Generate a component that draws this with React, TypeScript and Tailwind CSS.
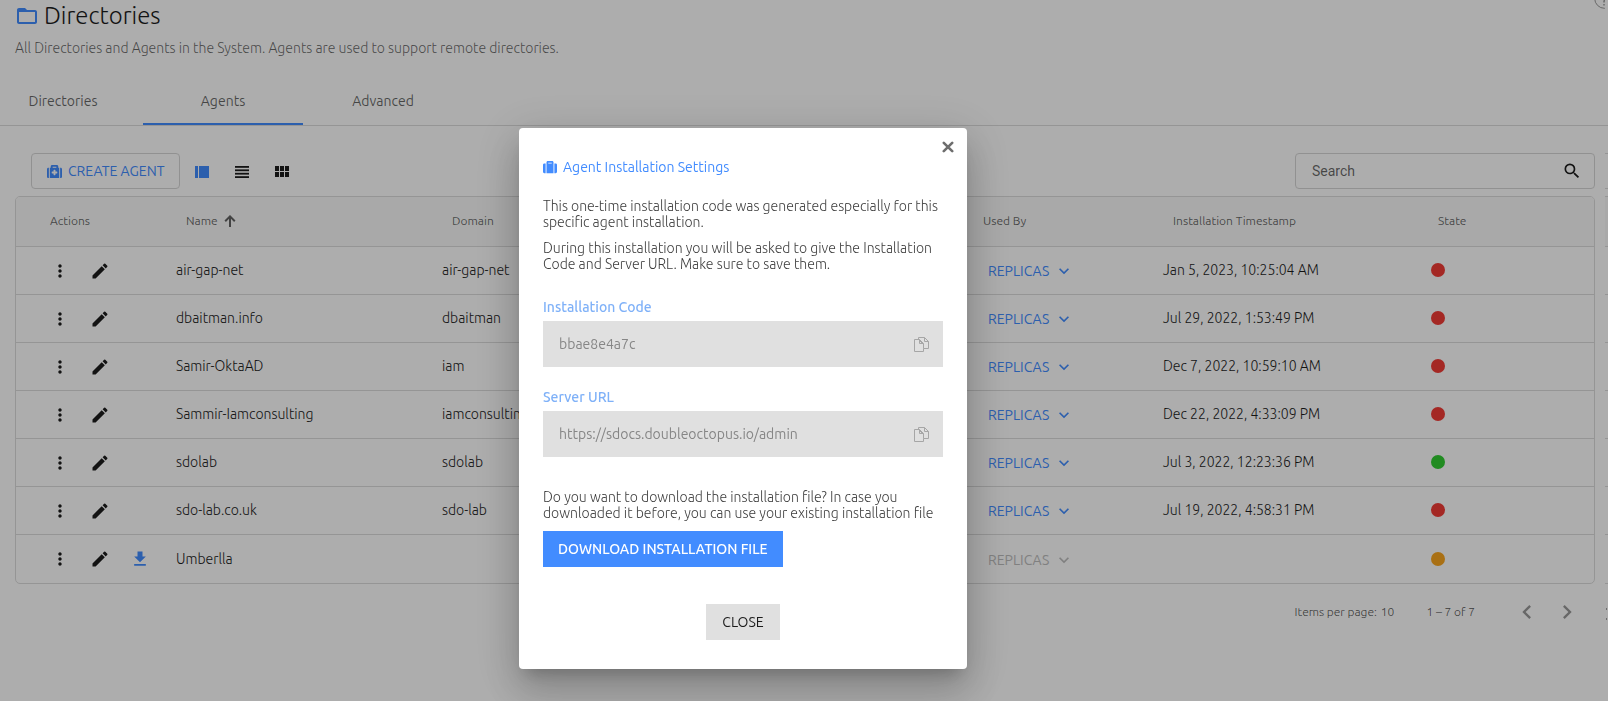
import { FaMedkit, FaSuitcase } from 'react-icons/fa';
import {
  MdChevronLeft,
  MdChevronRight,
  MdEdit,
  MdFileDownload,
  MdFolderOpen,
  MdKeyboardArrowDown,
  MdMoreVert,
  MdSearch,
} from 'react-icons/md';

type State = 'offline' | 'online' | 'pending';

interface Agent {
  name: string;
  domain: string;
  installed: string;
  state: State;
}

const AGENTS: Agent[] = [
  { name: 'air-gap-net', domain: 'air-gap-net', installed: 'Jan 5, 2023, 10:25:04 AM', state: 'offline' },
  { name: 'dbaitman.info', domain: 'dbaitman', installed: 'Jul 29, 2022, 1:53:49 PM', state: 'offline' },
  { name: 'Samir-OktaAD', domain: 'iam', installed: 'Dec 7, 2022, 10:59:10 AM', state: 'offline' },
  { name: 'Sammir-Iamconsulting', domain: 'iamconsulting', installed: 'Dec 22, 2022, 4:33:09 PM', state: 'offline' },
  { name: 'sdolab', domain: 'sdolab', installed: 'Jul 3, 2022, 12:23:36 PM', state: 'online' },
  { name: 'sdo-lab.co.uk', domain: 'sdo-lab', installed: 'Jul 19, 2022, 4:58:31 PM', state: 'offline' },
  { name: 'Umberlla', domain: '', installed: '', state: 'pending' },
];

const STATE_COLOR: Record<State, string> = {
  offline: 'bg-[#f23c36]',
  online: 'bg-[#32cd32]',
  pending: 'bg-[#faa61e]',
};

function SplitIcon() {
  return (
    <svg width="14" height="12" viewBox="0 0 14 12" fill="currentColor" aria-hidden="true">
      <rect width="3" height="12" />
      <rect x="4" width="10" height="12" />
    </svg>
  );
}

function LinesIcon() {
  return (
    <svg width="14" height="12" viewBox="0 0 14 12" fill="currentColor" aria-hidden="true">
      <rect width="14" height="1.8" />
      <rect y="3.4" width="14" height="1.8" />
      <rect y="6.8" width="14" height="1.8" />
      <rect y="10.2" width="14" height="1.8" />
    </svg>
  );
}

function GridIcon() {
  return (
    <svg width="14" height="11" viewBox="0 0 14 11" fill="currentColor" aria-hidden="true">
      {[0, 5, 10].map((x) =>
        [0, 6].map((y) => <rect key={`${x}-${y}`} x={x} y={y} width="4" height="5" />),
      )}
    </svg>
  );
}

function SortArrow() {
  return (
    <svg width="12" height="12" viewBox="0 0 12 12" fill="none" stroke="currentColor" strokeWidth="2" aria-hidden="true">
      <path d="M6 12V1.5M1.2 6.2L6 1.4l4.8 4.8" />
    </svg>
  );
}

function CopyIcon() {
  return (
    <svg width="15" height="15" viewBox="0 0 15 15" fill="none" stroke="currentColor" aria-hidden="true">
      <path d="M9.5 11.500v3h-9v-12h5l4 4v5M5.500 2.500v4h4" />
      <path d="M4.500 2.500v-2h6l4 4v7h-5M10.500 .5v4h4M4.500 2.500l5 5" />
    </svg>
  );
}

function CloseIcon() {
  return (
    <svg width="12" height="12" viewBox="0 0 12 12" fill="none" stroke="currentColor" strokeWidth="2.6" strokeLinecap="round" aria-hidden="true">
      <path d="M1.8 1.8l8.4 8.4M10.2 1.8l-8.4 8.4" />
    </svg>
  );
}

function HelpIcon() {
  return (
    <svg width="11" height="9" viewBox="0 0 11 9" fill="none" stroke="currentColor" aria-hidden="true">
      <circle cx="10.5" cy="-1.5" r="9.8" />
      <path d="M8.5 -1.5q1.5 -2.500 3 0q0 2 -1.500 2.500v1.500M10 4v1.500" strokeWidth="1.4" />
    </svg>
  );
}

function Tab({ label, active = false, first = false }: { label: string; active?: boolean; first?: boolean }) {
  return (
    <button
      role="tab"
      aria-selected={active}
      className={`h-12 border-b-2 pt-[2px] text-[#000000]/60 ${first ? 'w-[143px] pr-[17px]' : 'w-40'} ${
        active ? 'border-[#428cff]' : 'border-transparent'
      }`}
    >
      {label}
    </button>
  );
}

function AgentRow({ agent }: { agent: Agent }) {
  const pending = agent.state === 'pending';
  return (
    <tr className="h-12 border-t border-[#dcdcdc] last:h-[49px]">
      <td>
        <div className="flex pl-[34px] pt-px text-[#1c1c1c]">
          <button aria-label="More actions" className="flex w-5 justify-center">
            <MdMoreVert size={20} />
          </button>
          <button aria-label={`Edit ${agent.name}`} className="ml-5 flex w-5 justify-center">
            <MdEdit size={20} />
          </button>
          {pending && (
            <button aria-label="Download installer" className="ml-5 flex w-5 justify-center text-[#428cff]">
              <MdFileDownload size={20} />
            </button>
          )}
        </div>
      </td>
      <td>{agent.name}</td>
      <td>{agent.domain}</td>
      <td className="pt-[2px]">
        <button
          disabled={pending}
          className={`ml-[5px] flex items-center gap-[5px] font-normal ${pending ? 'text-[#bdbdbd]' : 'text-[#428cff]'}`}
        >
          REPLICAS
          <MdKeyboardArrowDown size={20} />
        </button>
      </td>
      <td>{agent.installed}</td>
      <td>
        <span role="img" aria-label={agent.state} className={`block size-[14px] rounded-full ${STATE_COLOR[agent.state]}`} />
      </td>
    </tr>
  );
}

function AgentsTable() {
  return (
    <div className="overflow-hidden rounded-[5px] border border-[#dcdcdc]">
      <table className="w-full table-fixed border-collapse text-left font-light text-[#1c1c1c]">
        <colgroup>
          <col className="w-[160px]" />
          <col className="w-[266px]" />
          <col />
          <col className="w-[180px]" />
          <col className="w-[268px]" />
          <col className="w-[163px]" />
        </colgroup>
        <thead className="bg-[#fafafa] text-xs text-[#000000]/60">
          <tr className="h-[49px]">
            <th className="pl-[34px] font-normal">Actions</th>
            <th className="pl-[10px] font-normal">
              <span className="flex items-center gap-[6px]">
                Name
                <SortArrow />
              </span>
            </th>
            <th className="pl-[10px] font-normal">Domain</th>
            <th className="font-normal">Used By</th>
            <th className="pl-[10px] font-normal">Installation Timestamp</th>
            <th className="pl-[7px] font-normal">State</th>
          </tr>
        </thead>
        <tbody>
          {AGENTS.map((agent) => (
            <AgentRow key={agent.name} agent={agent} />
          ))}
        </tbody>
      </table>
    </div>
  );
}

function NextPanelEdge() {
  return (
    <div aria-hidden="true" className="w-[3px] shrink-0">
      <div className="h-9 border-y border-[#dcdcdc]" />
      <div className="mt-[7px] h-[50px] border-t border-[#dcdcdc] bg-[#fafafa]" />
      {AGENTS.map((agent) => (
        <div key={agent.name} className="h-12 border-t border-[#dcdcdc]" />
      ))}
      <div className="mt-px flex flex-col items-center gap-2 border-t border-[#dcdcdc] pt-6">
        <span className="h-[2px] w-px bg-[#a0a0a0]" />
        <span className="h-[2px] w-px bg-[#a0a0a0]" />
      </div>
    </div>
  );
}

function CopyField({ id, label, value }: { id: string; label: string; value: string }) {
  return (
    <div>
      <label htmlFor={id} className="block font-medium leading-4 text-[#7fb1f8]">
        {label}
      </label>
      <div className="mt-[6px] flex h-[46px] items-center bg-[#e0e0e0] pl-4 pr-[14px]">
        <input id={id} readOnly value={value} className="min-w-0 flex-1 bg-transparent text-[#868686] outline-none" />
        <button aria-label={`Copy ${label}`} className="text-[#a6a6a6]">
          <CopyIcon />
        </button>
      </div>
    </div>
  );
}

function InstallDialog() {
  return (
    <div
      role="dialog"
      aria-modal="true"
      aria-labelledby="dialog-title"
      className="relative w-[448px] rounded bg-white px-6 pb-[29px] pt-[31px] shadow-[0_11px_15px_-7px_rgba(0,0,0,0.2),0_24px_38px_3px_rgba(0,0,0,0.14),0_9px_46px_8px_rgba(0,0,0,0.12)]"
    >
      <button aria-label="Close dialog" className="absolute right-[13px] top-[13px] text-[#6e6e6e]">
        <CloseIcon />
      </button>
      <h2 id="dialog-title" className="flex items-center gap-[6px] leading-4 text-[#428cff]">
        <FaSuitcase size={14} />
        Agent Installation Settings
      </h2>
      <div className="mt-[23px] font-light leading-4 text-[#3c3c3c]">
        <p>This one-time installation code was generated especially for this specific agent installation.</p>
        <p className="mt-[10px]">
          During this installation you will be asked to give the Installation Code and Server URL. Make sure to save
          them.
        </p>
      </div>
      <div className="mt-[27px] flex flex-col gap-[22px]">
        <CopyField id="code" label="Installation Code" value="bbae8e4a7c" />
        <CopyField id="url" label="Server URL" value="https://sdocs.doubleoctopus.io/admin" />
      </div>
      <p className="mt-8 font-light leading-4 text-[#3c3c3c]">
        Do you want to download the installation file? In case you downloaded it before, you can use your existing
        installation file
      </p>
      <button className="mt-[10px] h-9 bg-[#428cff] px-[15px] font-medium text-white">DOWNLOAD INSTALLATION FILE</button>
      <div className="mt-[37px] flex justify-center">
        <button className="h-9 bg-[#e0e0e0] px-4 text-[#1c1c1c]">CLOSE</button>
      </div>
    </div>
  );
}

export default function App() {
  return (
    <div className="min-h-screen overflow-hidden bg-white font-['Ubuntu','Noto_Sans',sans-serif] text-sm">
      <header className="relative">
        <div className="flex items-center gap-[5px] pl-[15px]">
          <MdFolderOpen size={24} className="text-[#428cff]" />
          <h1 className="text-2xl font-light leading-8 text-[#1c1c1c]">Directories</h1>
        </div>
        <p className="mt-[6px] pl-[15px] font-light leading-5 text-[#000000]/60">
          All Directories and Agents in the System. Agents are used to support remote directories.
        </p>
        <div className="absolute right-[3px] top-0 text-[#999999]">
          <HelpIcon />
        </div>
        <div role="tablist" className="mt-[19px] flex border-b border-[#dcdcdc]">
          <Tab label="Directories" first />
          <Tab label="Agents" active />
          <Tab label="Advanced" />
        </div>
      </header>

      <main className="flex pl-[15px] pt-[27px]">
        <section className="min-w-0 flex-1">
          <div className="flex h-9 items-center pl-4">
            <button className="flex h-9 items-center gap-[6px] rounded border border-[#d6d6d6] px-[15px] text-[#428cff]">
              <FaMedkit size={15} />
              CREATE AGENT
            </button>
            <div className="ml-[15px] flex gap-[26px] pt-px text-[#1c1c1c]">
              <button aria-label="Split view" className="text-[#428cff]">
                <SplitIcon />
              </button>
              <button aria-label="List view">
                <LinesIcon />
              </button>
              <button aria-label="Grid view">
                <GridIcon />
              </button>
            </div>
            <div className="ml-auto flex h-9 w-[300px] items-center rounded border border-[#d6d6d6] pl-4 pr-3 font-['Roboto',sans-serif]">
              <input
                type="text"
                aria-label="Search"
                placeholder="Search"
                className="min-w-0 flex-1 bg-transparent outline-none placeholder:text-[#000000]/60"
              />
              <MdSearch size={20} className="text-[#1c1c1c]" />
            </div>
          </div>
          <div className="mt-[7px]">
            <AgentsTable />
          </div>
          <div className="flex h-14 items-center justify-end pr-[14px] text-xs font-light text-[#000000]/70">
            <span>Items per page:</span>
            <span className="ml-1">10</span>
            <span className="ml-8">1 – 7 of 7</span>
            <button aria-label="Previous page" className="ml-[38px] text-[#000000]/40">
              <MdChevronLeft size={28} />
            </button>
            <button aria-label="Next page" className="ml-3 text-[#000000]/40">
              <MdChevronRight size={28} />
            </button>
          </div>
        </section>
        <div className="ml-[10px]">
          <NextPanelEdge />
        </div>
      </main>

      <div className="fixed inset-0 flex items-center justify-center bg-black/32 pr-[122px] pt-24">
        <InstallDialog />
      </div>
    </div>
  );
}
